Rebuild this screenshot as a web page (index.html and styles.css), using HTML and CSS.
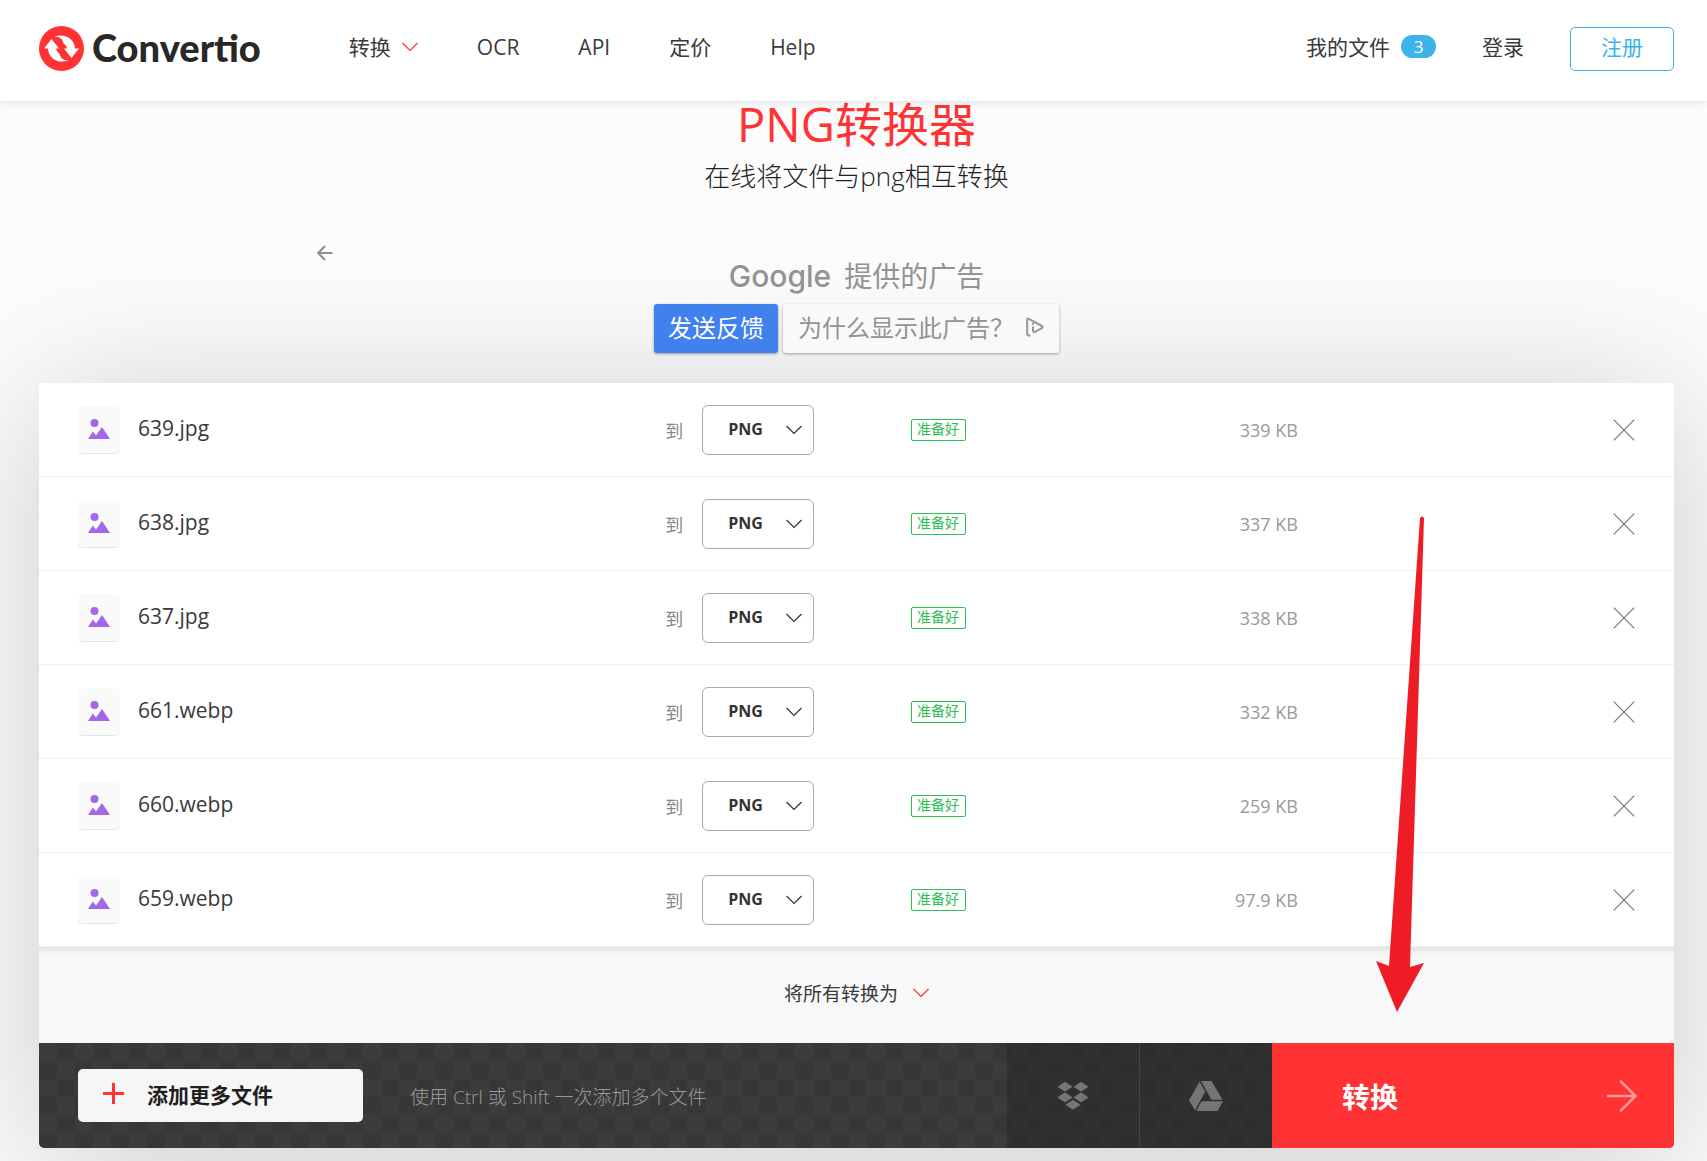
FILE: index.html
```html
<!DOCTYPE html>
<html lang="zh-CN">

<head>
  <meta charset="UTF-8">
  <meta name="viewport" content="width=device-width, initial-scale=1.0">
  <title>PNG转换器</title>
  <link rel="stylesheet" href="styles.css">
</head>

<body>
  <svg class="sprite" aria-hidden="true">
    <symbol id="chevron" viewBox="0 0 16 10">
      <path d="M.5 1 8 8.5 15.500 1" fill="none" stroke="currentColor" stroke-width="1.2" />
    </symbol>
    <symbol id="picture" viewBox="0 0 22 20">
      <circle cx="6.500" cy="4" r="4" fill="#a367e8" />
      <path d="M0 20 4.800 12.500 8 16.500 14 8 22 20Z" fill="#a367e8" />
    </symbol>
    <symbol id="cross" viewBox="0 0 22 22">
      <path d="M.7.7 21.300 21.300M21.300.7.7 21.300" fill="none" stroke="currentColor" stroke-width="1.200" />
    </symbol>
  </svg>

  <header class="header">
    <a class="logo" href="#">
      <svg class="logo-mark" viewBox="0 0 45 45" aria-hidden="true">
        <circle cx="22.500" cy="22.500" r="22.500" fill="#ff3333" />
        <path d="M12.500 13 20 22.500H17C17.500 25 19 26.500 20.500 27.500 21 31.500 24 34.500 29.500 34.500 20 38 9.500 33 9 22.500H5Z" fill="#fff" />
        <path d="M32.500 32 25 22.500H28C27.500 20 26 18.500 24.500 17.500 24 13.500 21 10.500 15.500 10.500 25 7 35.500 12 36 22.500H40Z" fill="#fff" />
      </svg>
      <span class="logo-text">Convertio</span>
    </a>
    <nav class="nav">
      <a class="nav-convert" href="#">转换 <svg class="chevron red"><use href="#chevron" /></svg></a>
      <a href="#">OCR</a>
      <a href="#">API</a>
      <a href="#">定价</a>
      <a href="#">Help</a>
    </nav>
    <div class="account">
      <a class="my-files" href="#">我的文件 <span class="count">3</span></a>
      <a href="#">登录</a>
      <button class="sign-up" type="button">注册</button>
    </div>
  </header>

  <main class="main">
    <h1>PNG转换器</h1>
    <h2>在线将文件与png相互转换</h2>

    <section class="ad">
      <button class="ad-back" type="button" aria-label="返回">
        <svg viewBox="0 0 16 16"><path d="M15.500 8H1.500M8 1 1.200 8 8 15" fill="none" stroke="#8f8f8f" stroke-width="2" /></svg>
      </button>
      <p class="ad-by"><span class="google">Google</span> 提供的广告</p>
      <div class="ad-buttons">
        <button class="feedback" type="button">发送反馈</button>
        <button class="why" type="button">为什么显示此广告？
          <svg viewBox="0 0 18 20" aria-hidden="true">
            <path d="M4.500 18.200Q1.200 19 1.200 17V2.500Q1.200 1 2.800 1.800L16 9Q17.200 10 16 11L9 14.800Q7 15.500 7 13.500V9.500" fill="none" stroke="#999" stroke-width="2" stroke-linejoin="round" />
            <circle cx="7" cy="6.800" r="1.200" fill="#999" />
          </svg>
        </button>
      </div>
    </section>

    <section class="panel">
      <table class="files">
        <colgroup>
          <col class="col-name">
          <col class="col-format">
          <col class="col-status">
          <col class="col-size">
          <col class="col-remove">
        </colgroup>
        <tbody>
          <tr>
            <td><div class="file"><span class="file-icon"><svg><use href="#picture" /></svg></span><span class="file-name">639.jpg</span></div></td>
            <td><label class="format">到 <span class="select"><select><option>PNG</option></select><svg class="chevron"><use href="#chevron" /></svg></span></label></td>
            <td><span class="ready">准备好</span></td>
            <td class="size">339 KB</td>
            <td class="remove"><button type="button" aria-label="删除"><svg><use href="#cross" /></svg></button></td>
          </tr>
          <tr>
            <td><div class="file"><span class="file-icon"><svg><use href="#picture" /></svg></span><span class="file-name">638.jpg</span></div></td>
            <td><label class="format">到 <span class="select"><select><option>PNG</option></select><svg class="chevron"><use href="#chevron" /></svg></span></label></td>
            <td><span class="ready">准备好</span></td>
            <td class="size">337 KB</td>
            <td class="remove"><button type="button" aria-label="删除"><svg><use href="#cross" /></svg></button></td>
          </tr>
          <tr>
            <td><div class="file"><span class="file-icon"><svg><use href="#picture" /></svg></span><span class="file-name">637.jpg</span></div></td>
            <td><label class="format">到 <span class="select"><select><option>PNG</option></select><svg class="chevron"><use href="#chevron" /></svg></span></label></td>
            <td><span class="ready">准备好</span></td>
            <td class="size">338 KB</td>
            <td class="remove"><button type="button" aria-label="删除"><svg><use href="#cross" /></svg></button></td>
          </tr>
          <tr>
            <td><div class="file"><span class="file-icon"><svg><use href="#picture" /></svg></span><span class="file-name">661.webp</span></div></td>
            <td><label class="format">到 <span class="select"><select><option>PNG</option></select><svg class="chevron"><use href="#chevron" /></svg></span></label></td>
            <td><span class="ready">准备好</span></td>
            <td class="size">332 KB</td>
            <td class="remove"><button type="button" aria-label="删除"><svg><use href="#cross" /></svg></button></td>
          </tr>
          <tr>
            <td><div class="file"><span class="file-icon"><svg><use href="#picture" /></svg></span><span class="file-name">660.webp</span></div></td>
            <td><label class="format">到 <span class="select"><select><option>PNG</option></select><svg class="chevron"><use href="#chevron" /></svg></span></label></td>
            <td><span class="ready">准备好</span></td>
            <td class="size">259 KB</td>
            <td class="remove"><button type="button" aria-label="删除"><svg><use href="#cross" /></svg></button></td>
          </tr>
          <tr>
            <td><div class="file"><span class="file-icon"><svg><use href="#picture" /></svg></span><span class="file-name">659.webp</span></div></td>
            <td><label class="format">到 <span class="select"><select><option>PNG</option></select><svg class="chevron"><use href="#chevron" /></svg></span></label></td>
            <td><span class="ready">准备好</span></td>
            <td class="size">97.9 KB</td>
            <td class="remove"><button type="button" aria-label="删除"><svg><use href="#cross" /></svg></button></td>
          </tr>
        </tbody>
      </table>

      <div class="convert-all">
        <button type="button" aria-haspopup="listbox">将所有转换为 <svg class="chevron red"><use href="#chevron" /></svg></button>
      </div>

      <div class="actions">
        <div class="add">
          <button class="add-more" type="button">
            <svg viewBox="0 0 21 21" aria-hidden="true"><path d="M0 10.500H21M10.500 0V21" stroke="#ff3333" stroke-width="3" /></svg>
            添加更多文件
          </button>
          <span class="hint">使用 Ctrl 或 Shift 一次添加多个文件</span>
        </div>
        <button class="cloud" type="button" aria-label="Dropbox">
          <svg viewBox="0 0 34 29">
            <path d="M9 0 17 5.300 9 10.600 1 5.300ZM25 0 33 5.300 25 10.600 17 5.300ZM9 10.600 17 15.900 9 21.200 1 15.900ZM25 10.600 33 15.900 25 21.200 17 15.900ZM17 18 25 23.300 17 28.600 9 23.300Z" fill="#757575" stroke="#323232" stroke-width=".6" />
          </svg>
        </button>
        <button class="cloud" type="button" aria-label="Google Drive">
          <svg viewBox="0 0 34 30">
            <path d="M10.500.8 16.300 10.500 6 29.500 0 19.500ZM12 0H22.500L33.500 18.800H22.500ZM12.500 20.300H34L28.500 30H7.300Z" fill="#757575" />
          </svg>
        </button>
        <button class="convert" type="button">
          转换
          <svg viewBox="0 0 30 32" aria-hidden="true"><path d="M0 16H28M14 1.500 28.500 16 14 30.500" fill="none" stroke="#ff9999" stroke-width="2.600" stroke-linecap="round" /></svg>
        </button>
      </div>

      <svg class="pointer" viewBox="0 0 50 496" aria-hidden="true">
        <path d="M45 2Q47 -1 49 2L35 451 49 447 22 496 1 445 14 450Z" fill="#ee1c25" />
      </svg>
    </section>
  </main>
</body>

</html>
```
FILE: styles.css
```css
* {
  margin: 0;
  padding: 0;
  box-sizing: border-box;
}

body {
  background-color: #fcfcfc;
  color: #3a3a3a;
  font-family: "Open Sans", "Noto Sans CJK SC", sans-serif;
  font-size: 21px;
}

a {
  color: inherit;
  text-decoration: none;
}

button,
select {
  border: none;
  background: none;
  color: inherit;
  font: inherit;
  cursor: pointer;
}

svg {
  display: block;
  flex-shrink: 0;
}

.sprite {
  position: absolute;
  width: 0;
  height: 0;
}

.chevron {
  width: 16px;
  height: 10px;
}

.red {
  color: #ff3333;
}

/* header */
.header {
  position: relative;
  z-index: 2;
  display: flex;
  align-items: center;
  height: 101px;
  padding: 0 33px 4px 39px;
  background-color: #fff;
  box-shadow: 0 0 10px rgba(0, 0, 0, .14);
  line-height: 28px;
}

.logo {
  display: flex;
  align-items: center;
  gap: 8px;
}

.logo-mark {
  width: 45px;
  height: 45px;
}

.logo-text {
  padding-bottom: 4px;
  color: #282828;
  font-family: Lato, sans-serif;
  font-size: 38px;
  font-weight: 900;
}

.nav {
  display: flex;
  gap: 59px;
  margin-left: 88px;
  padding-bottom: 4px;
}

.nav-convert,
.my-files {
  display: flex;
  align-items: center;
  gap: 11px;
}

.account {
  display: flex;
  align-items: center;
  gap: 46px;
  margin-left: auto;
}

.account a {
  padding-bottom: 4px;
}

.count {
  width: 35px;
  border-radius: 12px;
  background-color: #3cb4e9;
  color: #fff;
  font-size: 17px;
  line-height: 23px;
  text-align: center;
}

.sign-up {
  width: 104px;
  height: 44px;
  padding-bottom: 4px;
  border: 1px solid #3cb4e9;
  border-radius: 5px;
  color: #3cb4e9;
}

/* page title */
.main {
  padding: 0 33px 13px 39px;
}

h1 {
  color: #ff3333;
  font-size: 47px;
  font-weight: 400;
  line-height: 46px;
  text-align: center;
}

h2 {
  margin-top: 9px;
  color: #222;
  font-size: 26px;
  font-weight: 300;
  line-height: 40px;
  text-align: center;
}

/* ad block */
.ad {
  position: relative;
  z-index: 1;
  max-width: 1092px;
  height: 143px;
  margin: 44px auto 0;
  padding-top: 14px;
  color: #939393;
}

.ad-back {
  position: absolute;
  top: 5px;
  left: 6px;
}

.ad-back svg {
  width: 16px;
  height: 16px;
}

.ad-by {
  display: flex;
  justify-content: center;
  align-items: center;
  gap: 13px;
  font-size: 28px;
  line-height: 44px;
}

.google {
  font-family: Inter, sans-serif;
  font-size: 30px;
  font-weight: 500;
}

.ad-buttons {
  display: flex;
  justify-content: center;
  gap: 5px;
  margin-top: 6px;
}

.ad-buttons button {
  display: flex;
  align-items: center;
  height: 49px;
  padding: 0 15px 4px;
  border-radius: 3px;
  box-shadow: 0 1px 3px rgba(0, 0, 0, .35);
  font-size: 24px;
}

.ad-buttons .feedback {
  padding: 0 14px 4px;
  background-color: #4181ee;
  color: #fff;
}

.why {
  background-color: #f9f9f9;
}

.why svg {
  width: 18px;
  height: 20px;
  margin-left: 12px;
}

/* file list */
.panel {
  position: relative;
  border-radius: 0 0 5px 5px;
  box-shadow: 0 16px 150px rgba(0, 0, 0, .2);
}

.files {
  width: 100%;
  border-spacing: 0;
  table-layout: fixed;
  background-color: #fff;
}

.col-name {
  width: 38%;
}

.col-format {
  width: 15%;
}

.col-status {
  width: 11%;
}

.col-size {
  width: 13%;
}

.files td {
  height: 94px;
  padding-left: 5px;
  border-bottom: 1px solid #efefef;
}

.file {
  display: flex;
  align-items: center;
  gap: 18px;
  padding-left: 34px;
}

.file-name {
  padding-bottom: 4px;
}

.file-icon {
  display: flex;
  justify-content: center;
  align-items: center;
  width: 42px;
  height: 48px;
  border-bottom: 1px solid #e5e5e5;
  border-radius: 5px;
  background-color: #fafafa;
}

.file-icon svg {
  width: 22px;
  height: 20px;
}

.format {
  display: flex;
  align-items: center;
  gap: 19px;
  color: #888;
  font-size: 18px;
}

.select {
  position: relative;
}

.select select {
  display: block;
  width: 112px;
  height: 50px;
  padding: 0 0 2px 25px;
  border: 1px solid #aaa;
  border-radius: 6px;
  appearance: none;
  color: #333;
  font-size: 16px;
  font-weight: 700;
}

.select .chevron {
  position: absolute;
  top: 20px;
  right: 12px;
  color: #333;
  pointer-events: none;
}

.ready {
  display: block;
  width: 55px;
  height: 22px;
  border: 1px solid #2dbe56;
  border-radius: 2px;
  color: #2dbe56;
  font-size: 14px;
  line-height: 18px;
  text-align: center;
}

.size {
  color: #999;
  font-size: 18px;
  text-align: right;
}

.remove button {
  display: block;
  margin-left: auto;
  margin-right: 39px;
  color: #777;
}

.remove svg {
  width: 22px;
  height: 22px;
}

.convert-all {
  display: flex;
  justify-content: center;
  align-items: center;
  height: 96px;
  padding-bottom: 4px;
  background-color: #f8f8f8;
  box-shadow: inset 0 10px 10px -8px rgba(0, 0, 0, .13);
}

.convert-all button {
  display: flex;
  align-items: center;
  gap: 15px;
  font-size: 19px;
}

/* bottom bar */
.actions {
  display: flex;
  height: 105px;
  border-radius: 0 0 5px 5px;
  overflow: hidden;
  background: repeating-conic-gradient(#373737 0 25%, #3c3c3c 0 50%) 0 0 / 36px 36px;
}

.add {
  display: flex;
  flex: 1;
  align-items: center;
  gap: 47px;
  padding-left: 39px;
}

.add-more {
  display: flex;
  align-items: center;
  gap: 23px;
  width: 285px;
  height: 53px;
  padding: 0 0 4px 25px;
  border-radius: 5px;
  background-color: #f6f6f6;
  color: #1f1f1f;
  font-weight: 700;
}

.add-more svg {
  width: 21px;
  height: 21px;
}

.hint {
  color: #999;
  font-size: 19px;
  font-weight: 300;
}

.cloud {
  display: flex;
  justify-content: center;
  align-items: center;
  width: 132px;
  background-color: rgba(40, 40, 40, .6);
}

.cloud + .cloud {
  width: 133px;
  border-left: 1px solid #454545;
}

.cloud svg {
  width: 34px;
  height: 30px;
}

.convert {
  display: flex;
  justify-content: space-between;
  align-items: center;
  width: 402px;
  padding: 0 37px 0 70px;
  background-color: #ff3333;
  color: #fff;
  font-size: 28px;
  font-weight: 700;
}

.convert svg {
  width: 30px;
  height: 32px;
}

/* big arrow over the list */
.pointer {
  position: absolute;
  right: 249px;
  bottom: 136px;
  width: 50px;
  height: 496px;
  pointer-events: none;
}
```
